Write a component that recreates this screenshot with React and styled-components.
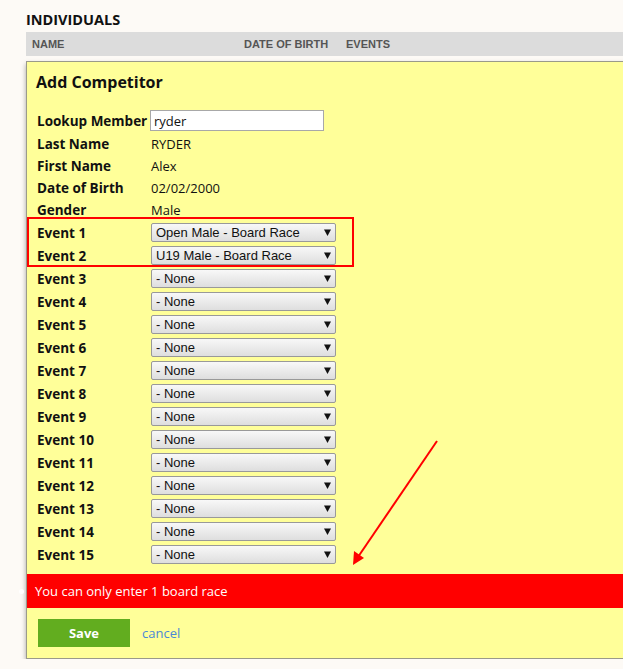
import React from "react";
import styled, { createGlobalStyle } from "styled-components";

const GlobalStyle = createGlobalStyle`
  html, body {
    margin: 0;
    padding: 0;
    background: #fdfaf6;
    overflow: hidden;
  }
  body {
    font-family: "Open Sans", "Liberation Sans", sans-serif;
  }
`;

const Page = styled.div`
  position: relative;
  width: 680px;
  padding: 11px 0 0 26px;
`;

const SectionTitle = styled.h2`
  margin: 0 0 3px 0;
  font-size: 14.5px;
  line-height: 18px;
  font-weight: 700;
  color: #111;
`;

const TableHead = styled.div`
  display: grid;
  grid-template-columns: 212px 102px 1fr;
  height: 24px;
  align-items: center;
  padding-left: 6px;
  background: #dcdcdc;
  font-family: "Liberation Sans", Arial, sans-serif;
  font-size: 11px;
  font-weight: 700;
  color: #555;
`;

const Modal = styled.div`
  margin-top: 5px;
  background: #ffff99;
  border: 1px solid #9a9a8a;
  box-shadow: 0 3px 5px rgba(0, 0, 0, 0.35);
`;

const ModalTitle = styled.h3`
  margin: 0;
  padding: 8px 9px 0;
  font-size: 16px;
  line-height: 24px;
  font-weight: 700;
  color: #111;
`;

const Form = styled.div`
  display: grid;
  grid-template-columns: 113px 1fr;
  padding: 14px 10px 0;
  color: #111;
`;

const Label = styled.div`
  display: flex;
  align-items: center;
  height: ${(p) => p.h}px;
  font-size: 13.5px;
  font-weight: 700;
  white-space: nowrap;
`;

const Value = styled.div`
  display: flex;
  align-items: center;
  height: ${(p) => p.h}px;
  padding-left: 1px;
  font-size: 13px;
`;

const TextInput = styled.input`
  box-sizing: border-box;
  width: 174px;
  height: 21px;
  margin: 0 0 0 -1px;
  padding: 0 3px;
  border: 1px solid #a8a8a8;
  background: #fff;
  font-family: "Open Sans", sans-serif;
  font-size: 13px;
  color: #111;
  outline: none;
`;

const SelectWrap = styled.div`
  position: relative;
  width: 185px;
  height: 19px;
`;

const Select = styled.select`
  box-sizing: border-box;
  appearance: none;
  width: 100%;
  height: 100%;
  margin: 0;
  padding: 0 0 0 4px;
  border: 1px solid #999;
  border-radius: 2px;
  background: linear-gradient(#f8f8f8, #dedede);
  font-family: "Liberation Sans", Arial, sans-serif;
  font-size: 13px;
  color: #111;
`;

const Caret = styled.svg`
  position: absolute;
  right: 5px;
  top: 6px;
  pointer-events: none;
`;

const Highlight = styled.div`
  position: absolute;
  left: 27px;
  top: 217px;
  width: 323px;
  height: 46px;
  border: 2px solid #ff0000;
  pointer-events: none;
`;

const Arrow = styled.svg`
  position: absolute;
  left: 0;
  top: 0;
  pointer-events: none;
`;

const ErrorList = styled.ul`
  margin: 8px 0 0;
  padding: 0 0 0 8px;
  height: 34px;
  display: flex;
  align-items: center;
  background: #ff0000;
  color: #fff;
  font-size: 13px;
  list-style: disc outside;
`;

const ErrorItem = styled.li`
  margin: 0;
`;

const Footer = styled.div`
  display: flex;
  align-items: center;
  gap: 12px;
  padding: 11px;
`;

const SaveButton = styled.button`
  width: 92px;
  height: 28px;
  border: none;
  background: #62ad1f;
  color: #fff;
  font-family: "Open Sans", sans-serif;
  font-size: 13px;
  font-weight: 700;
`;

const CancelLink = styled.a`
  color: #4a88d6;
  font-size: 13px;
  text-decoration: none;
`;

const details = [
  ["Last Name", "RYDER"],
  ["First Name", "Alex"],
  ["Date of Birth", "02/02/2000"],
  ["Gender", "Male"],
];

const events = [
  "Open Male - Board Race",
  "U19 Male - Board Race",
  ...Array(13).fill("- None"),
];

function EventSelect({ value }) {
  return (
    <SelectWrap>
      <Select defaultValue={value}>
        <option>{value}</option>
      </Select>
      <Caret width="7" height="7" viewBox="0 0 7 7">
        <path d="M0 0.5h7L3.5 7z" fill="#111" />
      </Caret>
    </SelectWrap>
  );
}

export default function App() {
  return (
    <>
      <GlobalStyle />
      <Page>
        <SectionTitle>INDIVIDUALS</SectionTitle>
        <TableHead>
          <span>NAME</span>
          <span>DATE OF BIRTH</span>
          <span>EVENTS</span>
        </TableHead>

        <Modal>
          <ModalTitle>Add Competitor</ModalTitle>
          <Form>
            <Label h={25}>Lookup Member</Label>
            <Value h={25}>
              <TextInput defaultValue="ryder" />
            </Value>
            {details.map(([label, value]) => (
              <React.Fragment key={label}>
                <Label h={22}>{label}</Label>
                <Value h={22}>{value}</Value>
              </React.Fragment>
            ))}
            {events.map((ev, i) => (
              <React.Fragment key={i}>
                <Label h={23}>Event {i + 1}</Label>
                <Value h={23}>
                  <EventSelect value={ev} />
                </Value>
              </React.Fragment>
            ))}
          </Form>
          <ErrorList>
            <ErrorItem>You can only enter 1 board race</ErrorItem>
          </ErrorList>
          <Footer>
            <SaveButton>Save</SaveButton>
            <CancelLink href="#">cancel</CancelLink>
          </Footer>
        </Modal>

        <Highlight />
        <Arrow width="623" height="669">
          <line x1="437" y1="441" x2="358" y2="557" stroke="#ff0000" strokeWidth="2" />
          <path d="M353 565 L354 551 L364 558 Z" fill="#ff0000" />
        </Arrow>
      </Page>
    </>
  );
}
